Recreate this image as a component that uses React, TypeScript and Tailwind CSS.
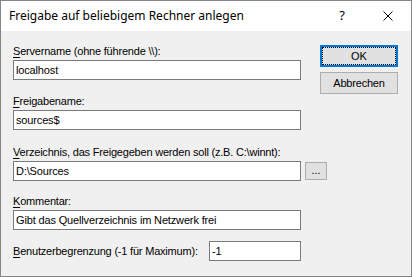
import React from "react";

const bodyFont = { fontFamily: '"Liberation Sans", Arial, sans-serif' };

function Label({ mnemonic, rest, className = "" }: { mnemonic: string; rest: string; className?: string }) {
  return (
    <div className={"text-[11px] leading-[13px] h-[13px] tracking-[-0.2px] text-black whitespace-nowrap " + className}>
      <span className="underline underline-offset-[2px]">{mnemonic}</span>
      {rest}
    </div>
  );
}

function Field({ value, className = "" }: { value: string; className?: string }) {
  return (
    <div
      className={
        "h-[20px] bg-white border border-[#7a7a7a] flex items-center px-[2px] text-[11px] leading-[13px] tracking-[-0.15px] text-black whitespace-nowrap overflow-hidden shrink-0 " +
        className
      }
    >
      {value}
    </div>
  );
}

export default function App() {
  return (
    <div
      className="w-[412px] h-[277px] border border-[#858585] flex flex-col bg-[#f0f0f0] overflow-hidden"
      style={bodyFont}
    >
      {/* Title bar */}
      <div className="h-[30px] bg-white flex items-center shrink-0">
        <div
          className="pl-[8px] text-[12px] text-black whitespace-nowrap"
          style={{ fontFamily: '"Noto Sans", "Open Sans", sans-serif' }}
        >
          Freigabe auf beliebigem Rechner anlegen
        </div>
        <div className="ml-auto flex h-full">
          <div
            className="w-[46px] h-full flex items-center justify-center text-[13px] text-black"
            style={{ fontFamily: '"Noto Sans", "Open Sans", sans-serif' }}
          >
            ?
          </div>
          <div className="w-[46px] h-full flex items-center justify-center">
            <svg width="10" height="10" viewBox="0 0 10 10">
              <path d="M0.5 0.5 L9.5 9.5 M9.5 0.5 L0.5 9.5" stroke="#000" strokeWidth="1" fill="none" />
            </svg>
          </div>
        </div>
      </div>

      {/* Body */}
      <div className="flex-1 flex pl-[12px]">
        <div className="w-[288px] shrink-0 flex flex-col">
          <Label className="mt-[14px]" mnemonic="S" rest="ervername (ohne führende \\):" />
          <Field className="mt-[2px] w-[288px]" value="localhost" />

          <Label className="mt-[15px]" mnemonic="F" rest="reigabename:" />
          <Field className="mt-[2px] w-[288px]" value="sources$" />

          <Label className="mt-[16px]" mnemonic="V" rest="erzeichnis, das Freigegeben werden soll (z.B. C:\winnt):" />
          <div className="mt-[2px] flex items-center">
            <Field className="w-[288px]" value="D:\Sources" />
            <button className="ml-[4px] w-[22px] h-[18px] shrink-0 bg-[#e1e1e1] border border-[#adadad] text-[11px] leading-[13px] text-black flex items-end justify-center pb-[2px]">
              ...
            </button>
          </div>

          <Label className="mt-[14px]" mnemonic="K" rest="ommentar:" />
          <Field className="mt-[2px] w-[288px]" value="Gibt das Quellverzeichnis im Netzwerk frei" />

          <div className="mt-[11px] flex items-center">
            <Label className="w-[196px]" mnemonic="B" rest="enutzerbegrenzung (-1 für Maximum):" />
            <Field className="w-[92px]" value="-1" />
          </div>
        </div>

        <div className="ml-[19px] flex flex-col">
          <button className="relative mt-[14px] w-[78px] h-[22px] bg-[#e1e1e1] border-2 border-[#0078d7] text-[11px] leading-[13px] text-black flex items-center justify-center">
            <span className="absolute inset-0 border border-dotted border-black" />
            OK
          </button>
          <button className="mt-[5px] w-[78px] h-[22px] bg-[#e1e1e1] border border-[#adadad] text-[11px] leading-[13px] tracking-[-0.2px] text-black flex items-center justify-center">
            Abbrechen
          </button>
        </div>
      </div>
    </div>
  );
}
